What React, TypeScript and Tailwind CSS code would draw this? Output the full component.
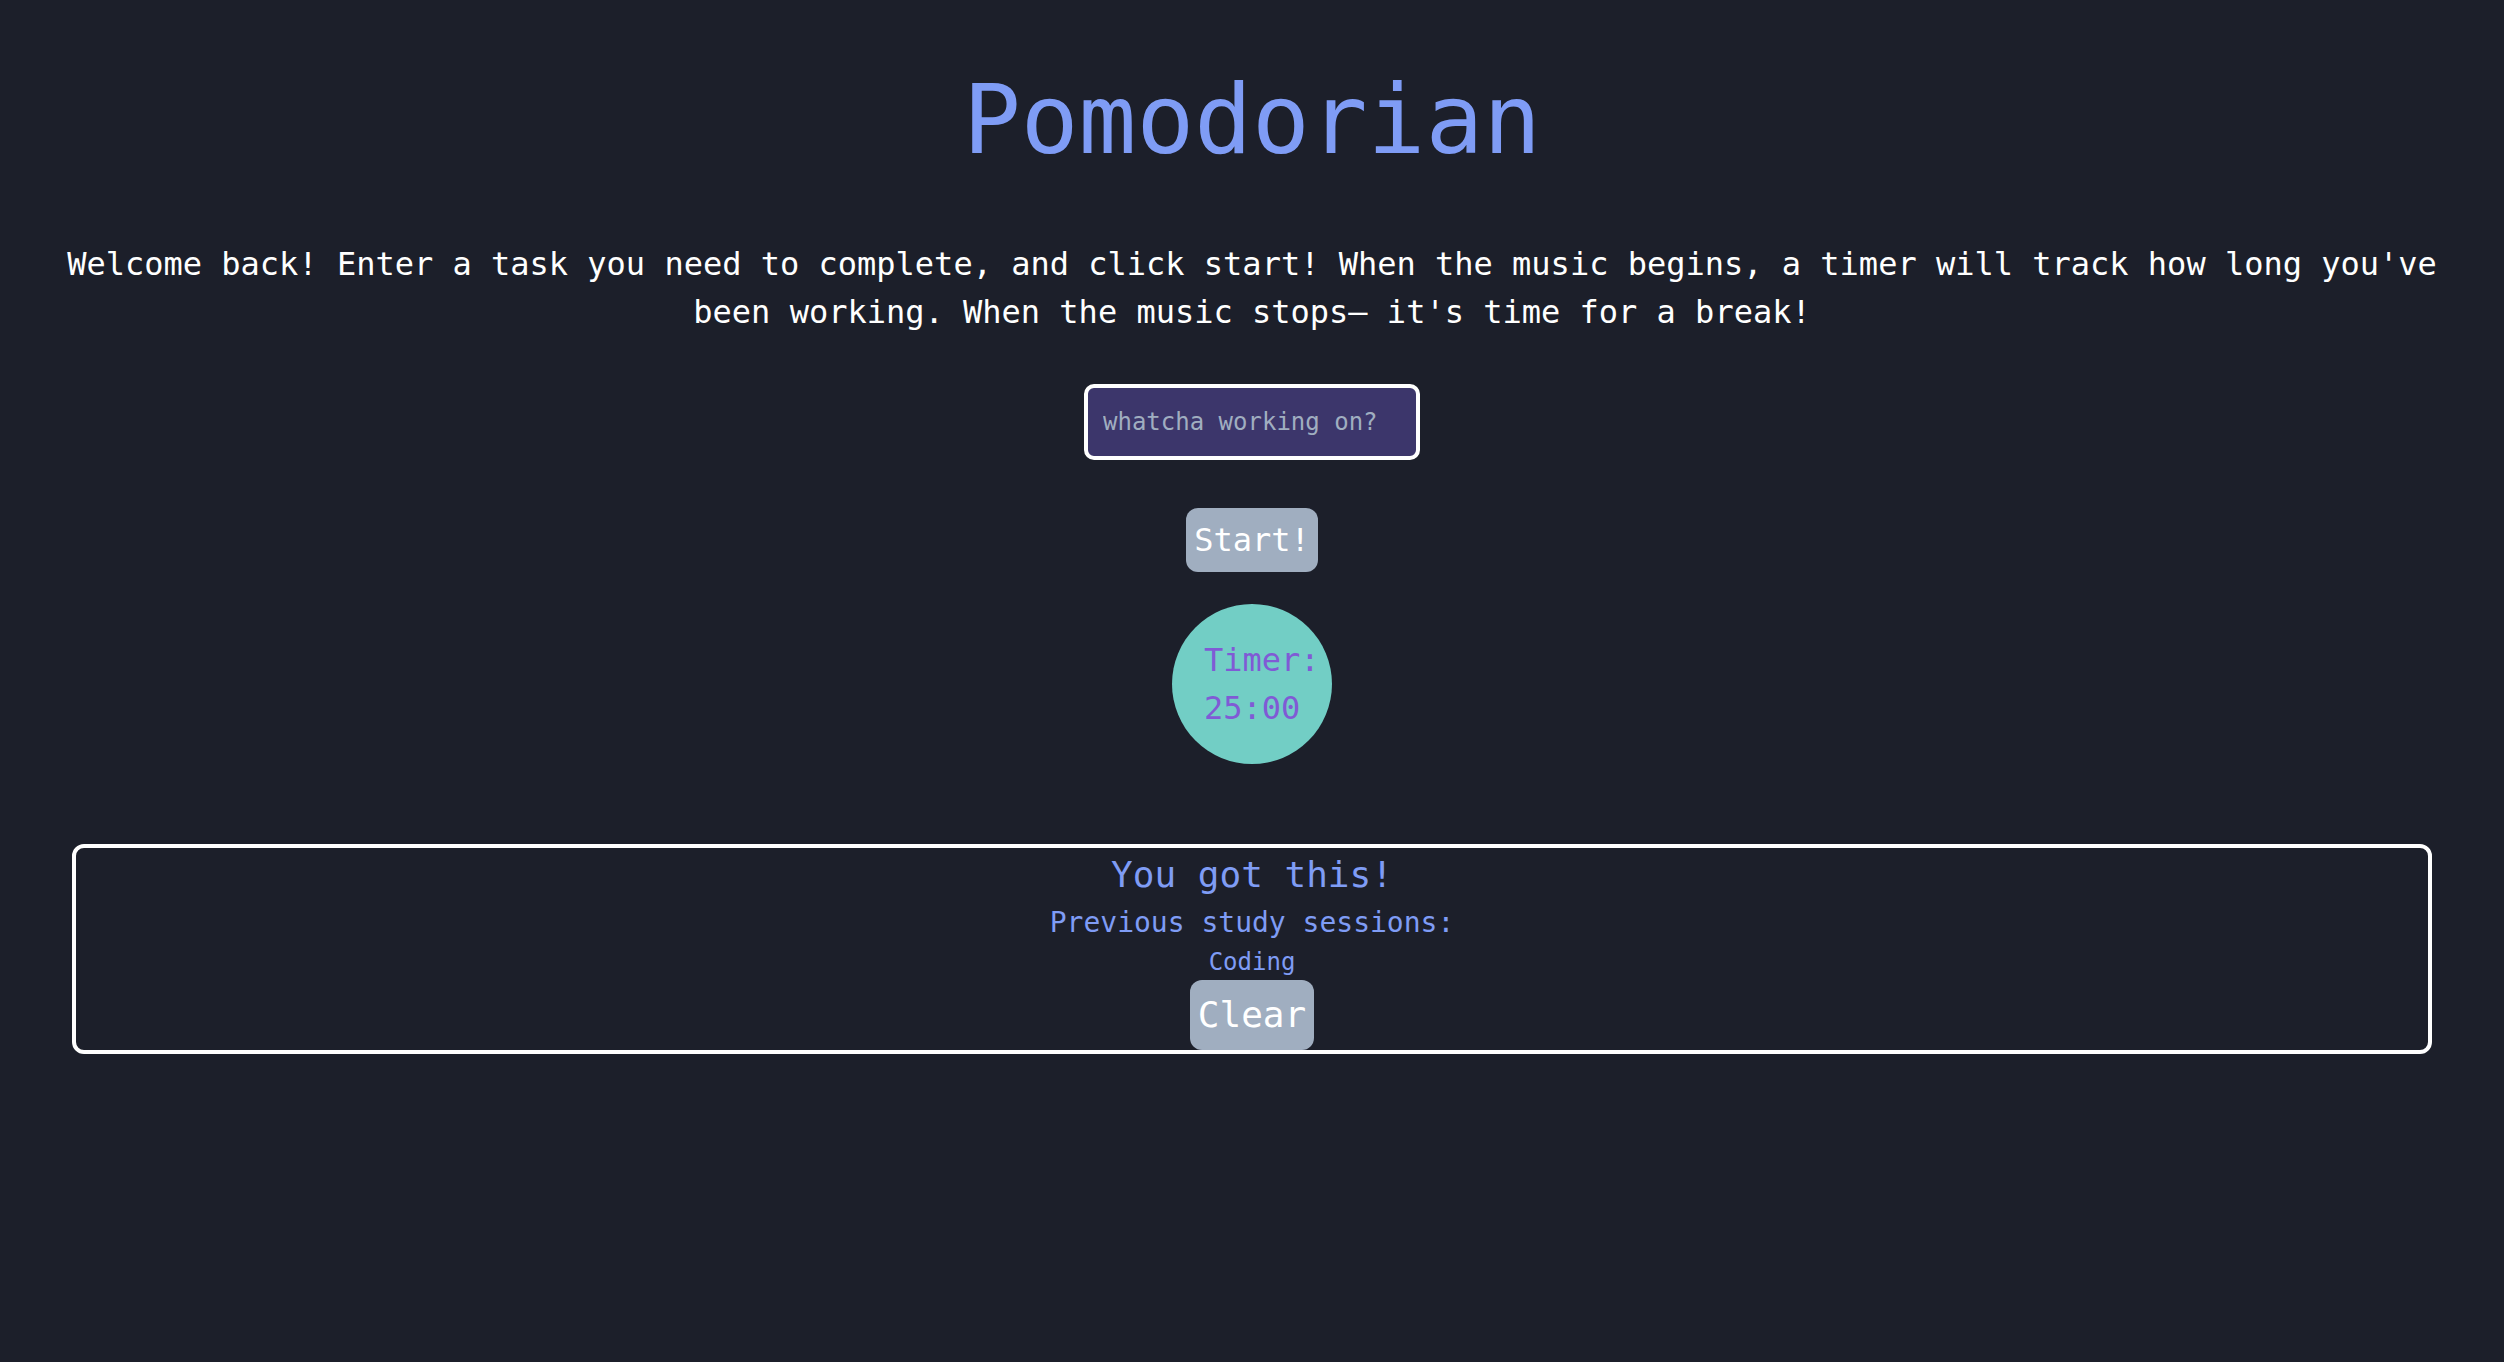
import React from "react";

export default function App() {
  return (
    <div className="min-h-screen bg-[#1c1f2a] font-['DejaVu_Sans_Mono',monospace] flex flex-col items-center">
      <h1 className="mt-[48px] text-[96px] leading-[144px] text-[#7f9cf5] font-normal">Pomodorian</h1>
      <p className="mt-[48px] px-[60px] text-center text-white text-[32px] leading-[48px]">
        Welcome back! Enter a task you need to complete, and click start! When the music begins, a timer will track how long you've been working. When the music stops– it's time for a break!
      </p>
      <input
        type="text"
        placeholder="whatcha working on?"
        className="mt-[48px] w-[336px] h-[76px] border-[4px] border-white rounded-[10px] bg-[#3c366b] px-[15px] text-[24px] leading-[36px] text-white placeholder:text-[#a0aec0] outline-none"
      />
      <button className="mt-[48px] bg-[#a0aec0] text-white text-[32px] leading-[48px] px-[8px] py-[8px] rounded-[12px]">
        Start!
      </button>
      <div className="mt-[32px] w-[160px] h-[160px] rounded-full bg-[#72cec5] p-[32px] text-[#805ad5] text-[32px] leading-[48px]">
        Timer: 25:00
      </div>
      <div className="mt-[80px] self-stretch mx-[72px] border-[4px] border-white rounded-[12px] flex flex-col items-center text-[#7f9cf5]">
        <h2 className="text-[36px] leading-[54px] font-normal">You got this!</h2>
        <h3 className="text-[28px] leading-[42px] font-normal">Previous study sessions:</h3>
        <ul>
          <li className="text-[24px] leading-[36px]">Coding</li>
        </ul>
        <button className="bg-[#a0aec0] text-white text-[36px] leading-[54px] px-[8px] py-[8px] rounded-[12px]">
          Clear
        </button>
      </div>
    </div>
  );
}
